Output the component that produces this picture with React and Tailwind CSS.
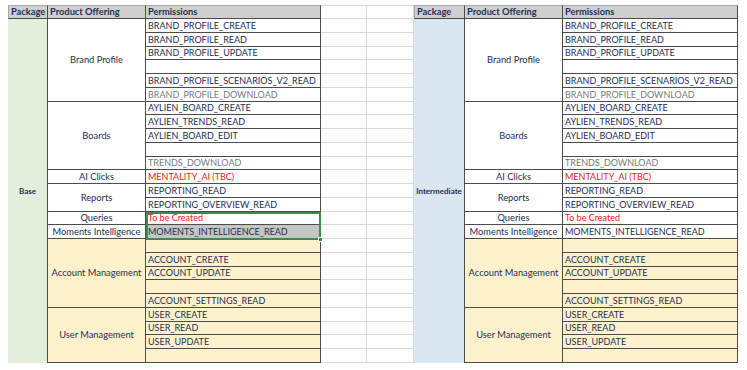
import React from 'react';

const ROW=13.76;
const NAVY='text-[#1e2f56]';

const perms=[
    {t:'BRAND_PROFILE_CREATE'},
    {t:'BRAND_PROFILE_READ'},
    {t:'BRAND_PROFILE_UPDATE'},
    {t:''},
    {t:'BRAND_PROFILE_SCENARIOS_V2_READ'},
    {t:'BRAND_PROFILE_DOWNLOAD', tone:'gray'},
    {t:'AYLIEN_BOARD_CREATE'},
    {t:'AYLIEN_TRENDS_READ'},
    {t:'AYLIEN_BOARD_EDIT'},
    {t:''},
    {t:'TRENDS_DOWNLOAD', tone:'gray'},
    {t:'MENTALITY_AI (TBC)', tone:'red'},
    {t:'REPORTING_READ'},
    {t:'REPORTING_OVERVIEW_READ'},
    {t:'To be Created', tone:'red'},
    {t:'MOMENTS_INTELLIGENCE_READ', sel:true},
    {t:'', yellow:true},
    {t:'ACCOUNT_CREATE', yellow:true},
    {t:'ACCOUNT_UPDATE', yellow:true},
    {t:'', yellow:true},
    {t:'ACCOUNT_SETTINGS_READ', yellow:true},
    {t:'USER_CREATE', yellow:true},
    {t:'USER_READ', yellow:true},
    {t:'USER_UPDATE', yellow:true},
    {t:'', yellow:true},
];

const groups=[
    {name:'Brand Profile', n:6},
    {name:'Boards', n:5},
    {name:'AI Clicks', n:1},
    {name:'Reports', n:2},
    {name:'Queries', n:1},
    {name:'Moments Intelligence', n:1},
    {name:'Account Management', n:5, yellow:true},
    {name:'User Management', n:4, yellow:true},
];

const toneClass={
    gray:'text-[#7b7b7b]',
    red:'text-[#f01620]',
};

function Header({children, className}){
    return(
        <div className={`h-[14px] shrink-0 bg-[#cfcfcf] border-t border-t-[#a8a8a8] border-b border-r border-[#4d4d4d] flex items-center pl-[2px] text-[9.3px] font-bold leading-none whitespace-nowrap ${NAVY} ${className||''}`}>
            {children}
        </div>
    );
}

function Table({pkg, pkgWidth, pkgBg, selection}){
    return(
        <div className="flex h-[358px]">
            <div className={`flex flex-col ${pkgWidth}`}>
                <Header className="border-l border-l-[#a8a8a8]">Package</Header>
                <div className={`flex-1 ${pkgBg} border-r border-[#4d4d4d] flex items-center justify-center text-[8px] font-bold ${NAVY}`}>
                    {pkg}
                </div>
            </div>

            <div className="flex flex-col w-[98px]">
                <Header>Product Offering</Header>
                {groups.map(g=>(
                    <div
                        key={g.name}
                        className={`shrink-0 border-b border-r border-[#4d4d4d] flex items-center justify-center text-[9.3px] leading-none whitespace-nowrap ${NAVY} ${g.yellow?'bg-[#fef2cd]':'bg-white'}`}
                        style={{height:`${g.n*ROW}px`}}
                    >
                        {g.name}
                    </div>
                ))}
            </div>

            <div className="relative flex flex-col w-[175px]">
                <Header>Permissions</Header>
                {perms.map((p, i)=>(
                    <div
                        key={i}
                        className={`h-[13.76px] shrink-0 border-b border-r border-[#4d4d4d] flex items-center pl-[2px] text-[9px] leading-none whitespace-nowrap ${p.tone?toneClass[p.tone]:NAVY} ${p.yellow?'bg-[#fef2cd]':(p.sel&&selection?'bg-[#c5c5c5]':'bg-white')}`}
                    >
                        {p.t}
                    </div>
                ))}
                {selection&&(
                    <div className="absolute left-0 right-0 top-[206.6px] h-[28.5px] border-2 border-[#3c8c50] pointer-events-none">
                        <div className="absolute -right-[4px] -bottom-[4px] w-[5px] h-[5px] bg-[#3c8c50] border border-white"/>
                    </div>
                )}
            </div>
        </div>
    );
}

function BlankColumn({width}){
    return(
        <div className={`flex flex-col ${width}`}>
            <div className="h-[14px] shrink-0 border-t border-b border-r border-[#dadada]"/>
            {perms.map((_, i)=>(
                <div key={i} className="h-[13.76px] shrink-0 border-b border-r border-[#dadada]"/>
            ))}
        </div>
    );
}

export default function App(){
    return(
        <div className="w-[747px] h-[370px] bg-white overflow-hidden" style={{fontFamily:'Lato, "Open Sans", sans-serif'}}>
            <div className="flex pt-[5px] pl-[8px]">
                <Table pkg="Base" pkgWidth="w-[40px]" pkgBg="bg-[#e2efda]" selection/>
                <BlankColumn width="w-[46px]"/>
                <BlankColumn width="w-[47px]"/>
                <Table pkg="Intermediate" pkgWidth="w-[51px]" pkgBg="bg-[#dbe6f3]"/>
            </div>
        </div>
    );
}
